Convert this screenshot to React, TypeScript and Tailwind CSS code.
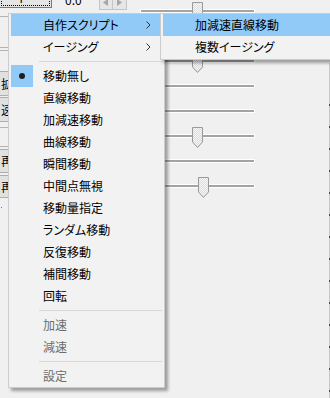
import React from "react";

function Chevron() {
  return (
    <svg width="5" height="8" viewBox="0 0 5 8" className="block">
      <path d="M0.5 0.5L4 4L0.5 7.5" fill="none" stroke="#333333" strokeWidth="1" />
    </svg>
  );
}

function Thumb() {
  return (
    <svg width="11" height="21" viewBox="0 0 11 21" className="block">
      <defs>
        <pattern id="chk" width="2" height="2" patternUnits="userSpaceOnUse">
          <rect width="2" height="2" fill="#f6f6f6" />
          <rect width="1" height="1" fill="#dcdcdc" />
          <rect x="1" y="1" width="1" height="1" fill="#dcdcdc" />
        </pattern>
      </defs>
      <path d="M0.5 0.5H10.5V15L5.5 20.5L0.5 15Z" fill="url(#chk)" stroke="#9a9a9a" />
    </svg>
  );
}

type ItemProps = {
  label: string;
  checked?: boolean;
  highlight?: boolean;
  disabled?: boolean;
  sub?: boolean;
};

function Item({ label, checked, highlight, disabled, sub }: ItemProps) {
  return (
    <div className={`flex h-[22px] items-center ${highlight ? "bg-[#91c9f7]" : ""}`}>
      <div
        className={`flex h-[22px] w-[22px] shrink-0 items-center justify-center ${
          checked ? "bg-[#91c9f7]" : ""
        }`}
      >
        {checked && <div className="h-[6px] w-[6px] rounded-full bg-[#1e1e1e]" />}
      </div>
      <span
        className={`flex-1 whitespace-nowrap pl-[10px] text-[12px] leading-[22px] ${
          disabled ? "text-[#6d6d6d]" : "text-black"
        }`}
      >
        {label}
      </span>
      {sub && (
        <div className="mr-[11px]">
          <Chevron />
        </div>
      )}
    </div>
  );
}

function Sep() {
  return (
    <div className="flex h-[7px] items-center pl-[28px]">
      <div className="h-px flex-1 bg-[#d7d7d7]" />
    </div>
  );
}

function SliderRow({ thumbX }: { thumbX?: number }) {
  return (
    <div className="relative h-[25px]">
      <div className="mt-[11px] h-[4px] border border-white bg-[#a3a3a3]" />
      {thumbX !== undefined && (
        <div className="absolute top-[4px]" style={{ left: thumbX }}>
          <Thumb />
        </div>
      )}
    </div>
  );
}

function LeftButton({ label, h, mt }: { label: string; h: string; mt: string }) {
  return (
    <div className={`${h} ${mt} -ml-[4px] w-[54px] border border-[#adadad] bg-[#e1e1e1] flex items-center pl-[4px] text-[12px] text-black`}>
      {label}
    </div>
  );
}

export default function App() {
  const ticks = Array.from({ length: 14 });
  return (
    <div className="relative h-[398px] w-[330px] overflow-hidden bg-[#f0f0f0] font-['Noto_Sans_CJK_JP','Noto_Sans',sans-serif] [font-feature-settings:'palt']">
      {/* background dialog */}
      <div className="-mt-[2px] flex">
        <div className="flex w-[140px] shrink-0 flex-col">
          {/* top row, cut at top of window */}
          <div className="-mt-[10px] flex h-[22px] items-start">
            <div className="-ml-[1px] h-[20px] w-[53px] border border-[#7a7a7a] bg-[#e5e5e5] p-px">
              <div className="flex h-full w-full items-end border border-dotted border-black pl-[16px] text-[12px] leading-[14px] text-black">
                Y
              </div>
            </div>
            <div className="ml-[13px] h-[19px] text-[12px] leading-[14px] text-black flex items-end">0.0</div>
            <div className="ml-[17px] flex">
              <div className="flex h-[22px] w-[14px] items-end justify-center border border-[#c4c4c4] bg-[#e6e6e6] pb-[3px]">
                <svg width="5" height="7" viewBox="0 0 5 7"><path d="M5 0V7L0 3.5Z" fill="#a6a6a6" /></svg>
              </div>
              <div className="flex h-[22px] w-[14px] items-end justify-center border border-l-0 border-[#c4c4c4] bg-[#e6e6e6] pb-[3px]">
                <svg width="5" height="7" viewBox="0 0 5 7"><path d="M0 0V7L5 3.5Z" fill="#a6a6a6" /></svg>
              </div>
            </div>
          </div>
          {/* left column of controls */}
          <div className="mt-[6px] h-[32px] -ml-[4px] w-[54px] border-y border-[#b4b4b4]" />
          <div className="mt-[2px] h-px w-[50px] bg-[#b4b4b4]" />
          <LeftButton label="拡大" h="h-[25px]" mt="mt-[20px]" />
          <LeftButton label="速度" h="h-[25px]" mt="mt-[1px]" />
          <div className="mt-[5px] h-[20px] -ml-[4px] w-[54px] border-y border-[#b4b4b4]" />
          <LeftButton label="再生" h="h-[24px]" mt="mt-[2px]" />
          <LeftButton label="再生" h="h-[23px]" mt="mt-[2px]" />
          <div className="ml-[1px] mt-[9px] h-px w-px bg-[#3c7fd8]" />
        </div>
        {/* sliders */}
        <div className="flex w-[115px] shrink-0 flex-col">
          <SliderRow thumbX={52} />
          <SliderRow />
          <SliderRow thumbX={52} />
          <SliderRow />
          <SliderRow />
          <SliderRow thumbX={52} />
          <SliderRow />
          <SliderRow thumbX={58} />
        </div>
        <div className="flex-1" />
        {/* right edge */}
        <div className="mt-[65px] flex w-px flex-col bg-[#c6c6c6]">
          <div className="h-[41px]" />
          {ticks.map((_, i) => (
            <div key={i} className="h-[22px]">
              <div className="h-[2px] bg-[#4a4a4a]" />
            </div>
          ))}
        </div>
      </div>

      {/* main context menu */}
      <div className="absolute left-[8px] top-[13px] w-[157px] border border-[#cccccc] bg-[#f2f2f2] px-[2px] shadow-[3px_3px_3px_rgba(0,0,0,0.35)]">
        <Item label="自作スクリプト" highlight sub />
        <Item label="イージング" sub />
        <Sep />
        <Item label="移動無し" checked />
        <Item label="直線移動" />
        <Item label="加減速移動" />
        <Item label="曲線移動" />
        <Item label="瞬間移動" />
        <Item label="中間点無視" />
        <Item label="移動量指定" />
        <Item label="ランダム移動" />
        <Item label="反復移動" />
        <Item label="補間移動" />
        <Item label="回転" />
        <Sep />
        <Item label="加速" disabled />
        <Item label="減速" disabled />
        <Sep />
        <Item label="設定" disabled />
      </div>

      {/* submenu */}
      <div className="absolute left-[160px] top-[13px] w-[180px] border border-[#cccccc] bg-[#f2f2f2] px-[2px] pb-px shadow-[3px_3px_3px_rgba(0,0,0,0.35)]">
        <Item label="加減速直線移動" highlight />
        <Item label="複数イージング" />
      </div>
    </div>
  );
}
